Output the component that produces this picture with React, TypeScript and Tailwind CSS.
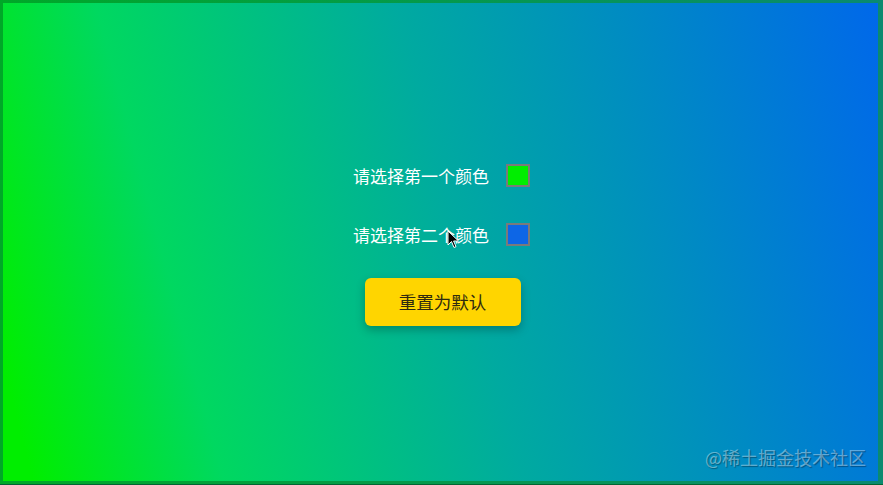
import React from "react";

function Row({ label, color }: { label: string; color: string }) {
  return (
    <div className="flex items-center gap-[17px]">
      <span className="text-[17px] leading-[22px] text-white">{label}</span>
      <div className="h-[23px] w-[24px] border-2 border-[#7a7a7a]" style={{ backgroundColor: color }} />
    </div>
  );
}

export default function App() {
  return (
    <div
      className="relative h-[485px] w-[883px] overflow-hidden bg-[linear-gradient(90deg,#00a828,#0a8a70)] pt-[3px] pl-[3px] pr-[5px] pb-[4px]"
      style={{ fontFamily: '"Noto Sans CJK SC", "Noto Sans", sans-serif' }}
    >
      <div className="flex h-full w-full flex-col items-center bg-[linear-gradient(75deg,#00ee00_3%,#00d860_22%,#00aaa0_52%,#0068ea_100%)] pt-[161px]">
        <div className="flex flex-col items-center">
          <div className="ml-[2px]">
            <Row label="请选择第一个颜色" color="#00ee00" />
          </div>
          <div className="ml-[2px] mt-[36px]">
            <Row label="请选择第二个颜色" color="#0d66e6" />
          </div>
          <button className="ml-[4px] mt-[32px] h-[48px] w-[156px] rounded-[6px] bg-[#ffd500] text-[17.5px] text-[#2e2a10] shadow-[0_4px_10px_rgba(0,0,0,0.25)]">
            重置为默认
          </button>
        </div>
      </div>
      <div className="absolute bottom-0 left-0 h-[1px] w-full bg-[#063]" />
      <div className="absolute right-[17px] top-[444px] text-[18px] leading-[26px] text-white/40 [text-shadow:1px_1px_1px_rgba(0,0,0,0.35)]">
        @稀土掘金技术社区
      </div>
      <svg className="absolute left-[447px] top-[230px]" width="13" height="19" viewBox="0 0 13 19">
        <path d="M1 1 L1 15 L4.5 11.5 L7 17.5 L9 16.6 L6.6 11 L11.5 11 Z" fill="#000" stroke="#fff" strokeWidth="1" />
      </svg>
    </div>
  );
}
